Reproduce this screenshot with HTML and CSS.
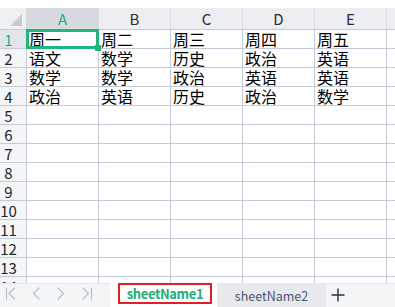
FILE: index.html
```html
<!DOCTYPE html>
<html lang="zh">
<head>
<meta charset="utf-8">
<title>sheet</title>
<link rel="stylesheet" href="styles.css">
</head>
<body>
<div class="app">
  <div class="sheet">
    <div class="corner"><span class="tri"></span></div>
    <div class="colh sel">A</div>
    <div class="colh">B</div>
    <div class="colh">C</div>
    <div class="colh">D</div>
    <div class="colh">E</div>
    <div class="colh"></div>

    <div class="rowh sel">1</div>
    <div class="cell active">周一<span class="handle"></span></div>
    <div class="cell">周二</div><div class="cell">周三</div><div class="cell">周四</div><div class="cell">周五</div><div class="cell"></div>

    <div class="rowh">2</div>
    <div class="cell">语文</div><div class="cell">数学</div><div class="cell">历史</div><div class="cell">政治</div><div class="cell">英语</div><div class="cell"></div>

    <div class="rowh">3</div>
    <div class="cell">数学</div><div class="cell">数学</div><div class="cell">政治</div><div class="cell">英语</div><div class="cell">英语</div><div class="cell"></div>

    <div class="rowh">4</div>
    <div class="cell">政治</div><div class="cell">英语</div><div class="cell">历史</div><div class="cell">政治</div><div class="cell">数学</div><div class="cell"></div>

    <div class="rowh">5</div><div class="cell"></div><div class="cell"></div><div class="cell"></div><div class="cell"></div><div class="cell"></div><div class="cell"></div>
    <div class="rowh">6</div><div class="cell"></div><div class="cell"></div><div class="cell"></div><div class="cell"></div><div class="cell"></div><div class="cell"></div>
    <div class="rowh">7</div><div class="cell"></div><div class="cell"></div><div class="cell"></div><div class="cell"></div><div class="cell"></div><div class="cell"></div>
    <div class="rowh">8</div><div class="cell"></div><div class="cell"></div><div class="cell"></div><div class="cell"></div><div class="cell"></div><div class="cell"></div>
    <div class="rowh">9</div><div class="cell"></div><div class="cell"></div><div class="cell"></div><div class="cell"></div><div class="cell"></div><div class="cell"></div>
    <div class="rowh">10</div><div class="cell"></div><div class="cell"></div><div class="cell"></div><div class="cell"></div><div class="cell"></div><div class="cell"></div>
    <div class="rowh">11</div><div class="cell"></div><div class="cell"></div><div class="cell"></div><div class="cell"></div><div class="cell"></div><div class="cell"></div>
    <div class="rowh">12</div><div class="cell"></div><div class="cell"></div><div class="cell"></div><div class="cell"></div><div class="cell"></div><div class="cell"></div>
    <div class="rowh">13</div><div class="cell"></div><div class="cell"></div><div class="cell"></div><div class="cell"></div><div class="cell"></div><div class="cell"></div>
    <div class="rowh">14</div><div class="cell"></div><div class="cell"></div><div class="cell"></div><div class="cell"></div><div class="cell"></div><div class="cell"></div>
  </div>

  <div class="tabbar">
    <div class="nav">
      <svg class="navicons" width="110" height="24" viewBox="0 0 110 24" fill="none" stroke="#b9bdc5" stroke-width="1.2" stroke-linecap="round" stroke-linejoin="round">
        <path d="M6.5 5v11"/>
        <path d="M14.5 5l-5.5 5.5 5.5 5.5"/>
        <path d="M39 5l-5.5 5.5 5.5 5.5"/>
        <path d="M58 5l5.5 5.5-5.5 5.5"/>
        <path d="M83 5l5.5 5.5-5.5 5.5"/>
        <path d="M91.5 5v11"/>
      </svg>
    </div>
    <div class="tabs">
      <div class="tab active">sheetName1</div>
      <div class="tab">sheetName2</div>
    </div>
    <div class="add">
      <svg class="plus" width="14" height="14" viewBox="0 0 14 14" fill="none" stroke="#2b3142" stroke-width="1.4">
        <path d="M7 0.5v13M0.5 7h13"/>
      </svg>
    </div>
  </div>
</div>
</body>
</html>
```

FILE: styles.css
```css
html, body {
  margin: 0;
  padding: 0;
  background: #ffffff;
}

.app {
  width: 395px;
  height: 307px;
  padding-top: 8px;
  box-sizing: border-box;
  display: flex;
  flex-direction: column;
  overflow: hidden;
  font-family: "Noto Sans CJK SC", "Noto Sans", sans-serif;
}

.sheet {
  height: 275px;
  display: grid;
  grid-template-columns: 27px repeat(6, 72px);
  grid-template-rows: 22px repeat(14, 19px);
  overflow: hidden;
  flex: none;
}

.corner {
  background: #eef0f2;
  border-right: 1px solid #d6d9df;
  border-bottom: 1px solid #c9cdd8;
  box-sizing: border-box;
  position: relative;
}

.tri {
  position: absolute;
  right: 4px;
  bottom: 3px;
  width: 0;
  height: 0;
  border-left: 12px solid transparent;
  border-bottom: 12px solid #c7cad0;
}

.colh {
  background: #eceef1;
  border-right: 1px solid #dadde3;
  border-bottom: 1px solid #c5cad6;
  box-sizing: border-box;
  font-size: 15px;
  line-height: 21px;
  text-align: center;
  color: #2c2c34;
}

.colh.sel {
  background: #d6d9df;
  color: #1fb27a;
}

.rowh {
  background: #f4f5f7;
  border-right: 1px solid #c5cad6;
  border-bottom: 1px solid #c5cad6;
  box-sizing: border-box;
  font-size: 15px;
  line-height: 19px;
  text-align: center;
  padding-right: 9px;
  color: #222430;
  white-space: nowrap;
}

.rowh.sel {
  background: #e2e5e9;
  color: #1fb27a;
}

.cell {
  border-right: 1px solid #c5cad6;
  border-bottom: 1px solid #c5cad6;
  box-sizing: border-box;
  font-size: 16px;
  line-height: 19px;
  padding-left: 2px;
  color: #000000;
  white-space: nowrap;
}

.cell.active {
  position: relative;
}

.cell.active::after {
  content: "";
  position: absolute;
  left: -1px;
  top: -1px;
  right: -1px;
  bottom: -1px;
  border: 3px solid #22b47c;
  z-index: 1;
}

.handle {
  position: absolute;
  right: -3px;
  bottom: -3px;
  width: 6px;
  height: 6px;
  background: #22b47c;
  z-index: 2;
}

.tabbar {
  height: 24px;
  display: flex;
  flex: none;
  background: #ffffff;
}

.nav {
  width: 110px;
  background: #f4f5f7;
  border-top: 1px solid #e4e6ea;
  box-sizing: border-box;
}

.navicons {
  display: block;
  margin-top: -1px;
}

.tabs {
  display: flex;
  gap: 5px;
  padding-left: 8px;
  align-items: flex-start;
}

.tab {
  width: 109px;
  height: 24px;
  background: #e8e9ec;
  font-size: 12.5px;
  line-height: 25px;
  text-align: center;
  color: #4b5672;
  box-sizing: border-box;
}

.tab.active {
  width: 94px;
  height: 21px;
  font-size: 13px;
  letter-spacing: -0.4px;
  line-height: 18px;
  background: #ffffff;
  border: 2px solid #e81c24;
  color: #20ad79;
  font-weight: bold;
}

.add {
  flex: 1;
  background: #f4f5f7;
  border-top: 1px solid #e4e6ea;
  box-sizing: border-box;
  padding: 4px 0 0 5px;
}

.plus {
  display: block;
}
```
